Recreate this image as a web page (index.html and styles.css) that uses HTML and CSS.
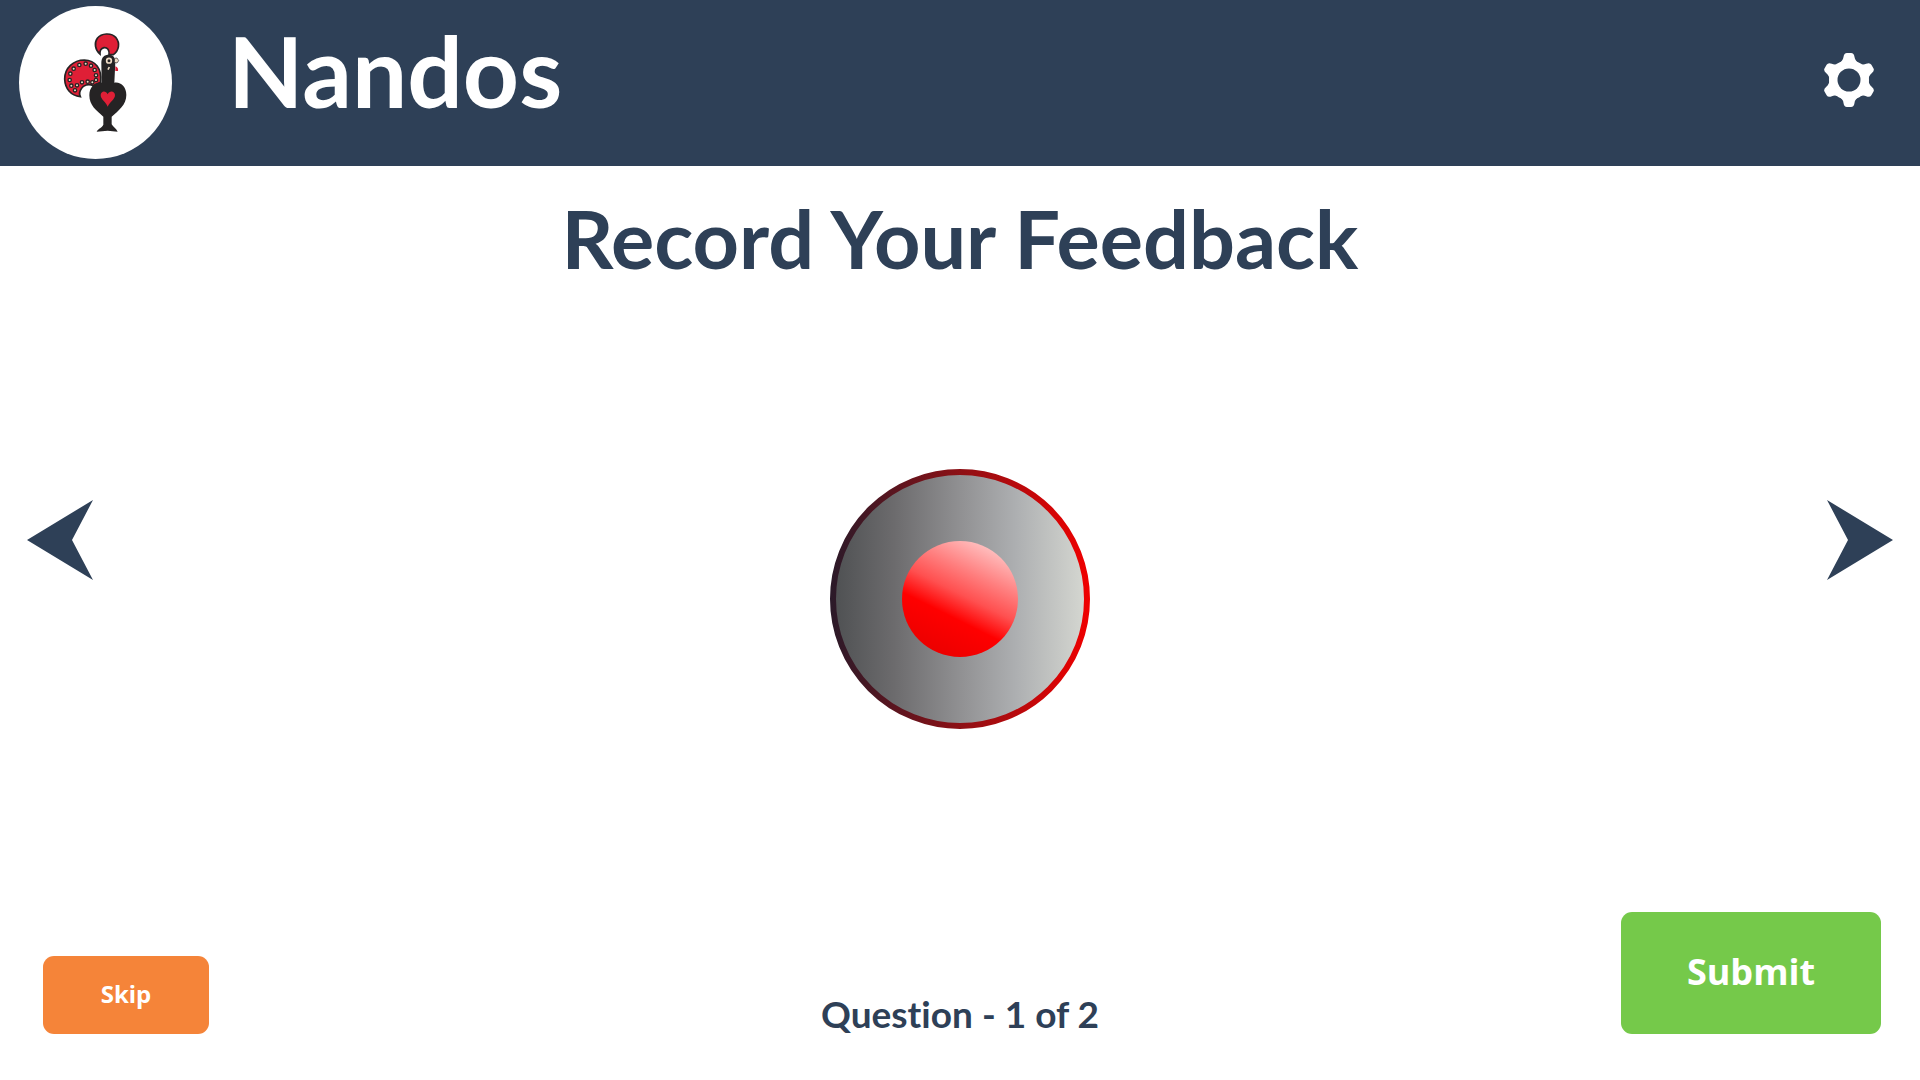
FILE: index.html
```html
<!DOCTYPE html>
<html lang="en">
<head>
<meta charset="utf-8">
<meta name="viewport" content="width=device-width, initial-scale=1">
<title>Nandos - Record Your Feedback</title>
<link rel="stylesheet" href="styles.css">
</head>
<body>
<header class="topbar">
  <div class="brand">
    <span class="logo">
      <svg class="rooster" viewBox="188 97 198 306" role="img" aria-label="Nandos rooster">
        <!-- tail -->
        <path d="M240 291C211 288 194 266 193 238C193 205 219 181 252 181C285 182 305 206 301 248C292 252 286 254 279 258C264 251 249 257 243 267C237 275 237 284 240 291Z" fill="#df1f36" stroke="#252324" stroke-width="5"/>
        <g fill="#efdcc5" stroke="#252324" stroke-width="4">
          <circle cx="208" cy="241" r="5"/><circle cx="210" cy="222" r="5"/><circle cx="220" cy="207" r="5"/><circle cx="237" cy="196" r="5"/><circle cx="256" cy="192" r="5"/><circle cx="272" cy="198" r="5"/><circle cx="283" cy="211" r="5"/><circle cx="287" cy="227" r="5"/><circle cx="287" cy="241" r="5"/><circle cx="213" cy="258" r="5"/><circle cx="224" cy="272" r="5"/><circle cx="230" cy="257" r="5"/><circle cx="245" cy="248" r="5"/><circle cx="262" cy="246" r="5"/><circle cx="276" cy="248" r="5"/>
        </g>
        <!-- comb -->
        <path d="M299 163C284 151 281 130 291 116C303 100 333 98 347 114C360 130 356 153 339 165L326 165C328 151 321 143 311 144C302 146 298 153 299 163Z" fill="#df1f36" stroke="#252324" stroke-width="5"/>
        <!-- body -->
        <path d="M304 249L303 190C303 172 312 165 326 165C339 165 345 174 345 188L342 249C362 246 378 262 378 286C378 316 354 333 334 351L334 374C338 382 348 387 352 396L322 393L289 396C294 386 305 384 309 375L309 351C288 333 267 317 267 287C267 262 284 246 304 249Z" fill="#252324"/>
        <path d="M322 321C317 306 301 300 301 286C302 273 317 272 322 284C327 272 343 273 344 286C344 300 328 306 322 321Z" fill="#df1f36"/>
        <!-- face -->
        <circle cx="326" cy="183" r="7" fill="#252324" stroke="#efdcc5" stroke-width="5"/>
        <path d="M343 176L350 175L355 183L350 190L342 188Z" fill="#efdcc5" stroke="#252324" stroke-width="2"/>
        <path d="M345 200Q355 203 353 214L345 214Z" fill="#df1f36"/>
        <path d="M327 202L323 210" stroke="#efdcc5" stroke-width="5"/>
      </svg>
    </span>
    <span class="brand-name">Nandos</span>
  </div>
  <button class="icon-button settings" type="button" aria-label="Settings">
    <svg class="gear" viewBox="-25 -27 50 54" aria-hidden="true">
      <defs>
        <path id="tooth" d="M-13-15Q-6-18-5.500-23Q-5-27-2-27H2Q5-27 5.500-23Q6-18 13-15L8-11H-8Z"/>
        <mask id="hub" maskUnits="userSpaceOnUse" x="-28" y="-28" width="56" height="56"><path fill="#fff" d="M-28-28H28V28H-28Z"/><circle r="11.500" fill="#000"/></mask>
      </defs>
      <g fill="#fff" mask="url(#hub)">
        <circle r="20"/>
        <use href="#tooth"/><use href="#tooth" transform="rotate(60)"/><use href="#tooth" transform="rotate(120)"/><use href="#tooth" transform="rotate(180)"/><use href="#tooth" transform="rotate(240)"/><use href="#tooth" transform="rotate(300)"/>
      </g>
    </svg>
  </button>
</header>

<main class="recorder">
  <h1 class="title">Record Your Feedback</h1>
  <div class="stage">
    <button class="icon-button arrow" type="button" aria-label="Previous question">
      <svg viewBox="0 0 66 80" aria-hidden="true"><path d="M0 40L66 0L45 40L66 80Z"/></svg>
    </button>
    <button class="icon-button record" type="button" aria-label="Start recording">
      <svg viewBox="0 0 260 260" aria-hidden="true">
        <defs>
          <linearGradient id="dial">
            <stop offset="0" stop-color="#4e5052"/><stop offset=".24" stop-color="#6c6b6d"/><stop offset=".52" stop-color="#939395"/><stop offset=".72" stop-color="#adafb1"/><stop offset="1" stop-color="#d6d8d2"/>
          </linearGradient>
          <linearGradient id="rim" gradientUnits="userSpaceOnUse" x1="0" y1="0" x2="260" y2="0">
            <stop offset="0" stop-color="#2a1a29"/><stop offset=".5" stop-color="#8d1015"/><stop offset="1" stop-color="#f00000"/>
          </linearGradient>
          <linearGradient id="lamp" gradientUnits="userSpaceOnUse" x1="156" y1="78" x2="104" y2="182">
            <stop offset="0" stop-color="#ffbcbc"/><stop offset=".25" stop-color="#ff8080"/><stop offset=".46" stop-color="#ff5050"/><stop offset=".67" stop-color="#f00"/><stop offset="1" stop-color="#ec0000"/>
          </linearGradient>
        </defs>
        <circle cx="130" cy="130" r="127" fill="url(#dial)" stroke="url(#rim)" stroke-width="6"/>
        <circle cx="130" cy="130" r="58" fill="url(#lamp)"/>
      </svg>
    </button>
    <button class="icon-button arrow" type="button" aria-label="Next question">
      <svg viewBox="0 0 66 80" aria-hidden="true"><path d="M66 40L0 0L21 40L0 80Z"/></svg>
    </button>
  </div>
</main>

<footer class="actions">
  <button class="button skip" type="button">Skip</button>
  <p class="progress">Question - 1 of 2</p>
  <button class="button submit" type="button">Submit</button>
</footer>
</body>
</html>
```

FILE: styles.css
```css
* {
  box-sizing: border-box;
}

body {
  margin: 0;
  min-height: 100vh;
  display: flex;
  flex-direction: column;
  background: #fff;
  color: #2e4057;
  font-family: Lato, "Open Sans", sans-serif;
  font-weight: 700;
  font-variant-ligatures: none;
}

button {
  font: inherit;
  border: 0;
  cursor: pointer;
}

svg {
  display: block;
}

.topbar {
  display: flex;
  align-items: center;
  justify-content: space-between;
  padding: 6px 46px 7px 19px;
  background: #2e4057;
  color: #fff;
}

.brand {
  display: flex;
  align-items: center;
  gap: 56px;
}

.logo {
  display: grid;
  place-items: center;
  width: 153px;
  height: 153px;
  border-radius: 50%;
  background: #fff;
}

.rooster {
  width: 66px;
  height: 102px;
}

.brand-name {
  padding-bottom: 26px;
  font-size: 98px;
  line-height: 120px;
}

.icon-button {
  flex: none;
  padding: 0;
  background: none;
}

.settings {
  padding-bottom: 6px;
}

.gear {
  width: 50px;
  height: 54px;
}

.recorder {
  flex: 1;
  display: flex;
  flex-direction: column;
}

.title {
  margin: 0;
  padding-top: 24px;
  font-size: 81px;
  line-height: 96px;
  text-align: center;
}

.stage {
  flex: 1;
  display: flex;
  align-items: center;
  justify-content: space-between;
  padding: 0 27px;
}

.arrow {
  width: 66px;
  margin-bottom: 118px;
  fill: #2e4057;
}

.record {
  width: 260px;
  border-radius: 50%;
}

.actions {
  display: grid;
  grid-template-columns: 1fr auto 1fr;
  align-items: end;
  padding: 0 39px 46px 43px;
}

.button {
  padding: 0 0 4px;
  border-radius: 11px;
  color: #fff;
  font-family: "Open Sans", "Noto Sans", sans-serif;
}

.skip {
  justify-self: start;
  width: 166px;
  height: 78px;
  background: #f58439;
  font-size: 24px;
}

.submit {
  justify-self: end;
  width: 260px;
  height: 122px;
  background: #75c94a;
  font-size: 36px;
}

.progress {
  margin: 0;
  padding: 0 4px 2px 0;
  font-size: 37px;
  line-height: 36px;
}
```
